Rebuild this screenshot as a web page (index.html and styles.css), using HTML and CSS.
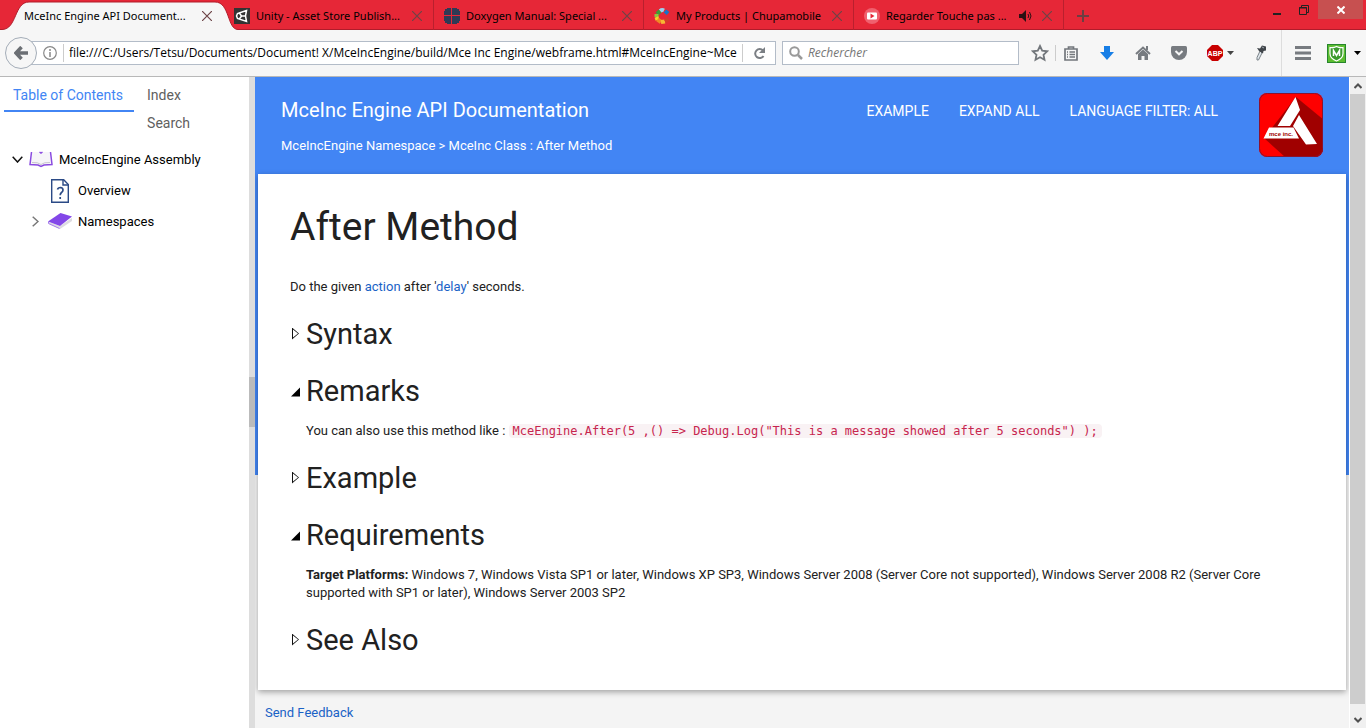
FILE: index.html
```html
<!DOCTYPE html>
<html lang="en">
<head>
<meta charset="utf-8">
<title>MceInc Engine API Documentation</title>
<link rel="stylesheet" href="styles.css">
</head>
<body>
<header class="tabstrip">
  <div class="tab tab-active">
    <svg class="tab-shape" width="236" height="30" viewBox="0 0 236 30"><path d="M0 30V29.500C15 29.500 12 2 27 2H213C228 2 225 29.500 236 29.500V30Z" fill="#f6f6f6"/><path d="M0 29.500C15 29.500 12 2 27 2H213C228 2 225 29.500 236 29.500" fill="none" stroke="#b01c2b"/></svg>
    <span class="tab-title">MceInc Engine API Document...</span>
    <button class="tab-close" aria-label="Close tab"><svg width="10" height="10"><path d="M0 0L10 10M10 0L0 10"/></svg></button>
  </div>
  <div class="tab">
    <svg class="favicon" width="16" height="16"><path fill="#333" d="M0 0h16v16H0z"/><path d="M12.500 2.500L3.500 5.500 2.500 8l1 2.500 9 3-1-5.500zM7.500 8h4.500M7.500 8L5 4.500M7.500 8L5 11.500" fill="none" stroke="#fff" stroke-width="1.500"/></svg>
    <span class="tab-title">Unity - Asset Store Publish...</span>
    <button class="tab-close" aria-label="Close tab"><svg width="10" height="10"><path d="M0 0L10 10M10 0L0 10"/></svg></button>
  </div>
  <div class="tab">
    <svg class="favicon" width="16" height="16"><path fill="#2f3a55" d="M3 0h4v7H0V3h1V1h2zM8 0h5v1h2v2h1v4H8zM0 8h7v8H3v-1H1v-2H0zM8 8h8v5h-1v2h-2v1H8z"/></svg>
    <span class="tab-title">Doxygen Manual: Special ...</span>
    <button class="tab-close" aria-label="Close tab"><svg width="10" height="10"><path d="M0 0L10 10M10 0L0 10"/></svg></button>
  </div>
  <div class="tab">
    <svg class="favicon" width="16" height="16" fill="none" stroke-width="4"><path stroke="#9bd0ef" d="M6 3Q8 1.500 10 2.500"/><path stroke="#1673c8" d="M11 3l3 2.500"/><path stroke="#3f9b35" d="M3 6l3-3"/><path stroke="#8cc63f" d="M2.500 9V6"/><path stroke="#f5d327" d="M3.500 12l-1-3"/><path stroke="#f08a24" d="M7 14l-3.500-2.500"/><path stroke="#f7b733" d="M11 13.500L7 14"/><path stroke="#d63a2b" d="M14.500 11L11 13.500"/></svg>
    <span class="tab-title">My Products | Chupamobile</span>
    <button class="tab-close" aria-label="Close tab"><svg width="10" height="10"><path d="M0 0L10 10M10 0L0 10"/></svg></button>
  </div>
  <div class="tab">
    <svg class="favicon" width="16" height="16"><circle cx="8" cy="8" r="8" fill="#f0606e"/><rect x="3" y="4.500" width="10" height="7" rx="1" fill="#fff"/><path d="M6.500 5.500v5l4-2.500z" fill="#e62737"/></svg>
    <span class="tab-title">Regarder Touche pas ...</span>
    <button class="tab-sound" aria-label="Mute tab"><svg width="14" height="12"><path d="M0 4h3l4-4v12L3 8H0z" fill="#2b1013"/><path d="M9 4q1.500 2 0 4M10.500 2q3 4 0 8" fill="none" stroke="#2b1013"/></svg></button>
    <button class="tab-close" aria-label="Close tab"><svg width="10" height="10"><path d="M0 0L10 10M10 0L0 10"/></svg></button>
  </div>
  <button class="new-tab" aria-label="New tab"><svg width="12" height="12"><path d="M6 0v12M0 6h12" stroke="#6d3e42" stroke-width="2"/></svg></button>
  <div class="window-controls">
    <button aria-label="Minimize"><svg width="8" height="10"><path d="M0 9h8" stroke="#222" stroke-width="2"/></svg></button>
    <button aria-label="Restore"><svg width="10" height="10"><path d="M2.500 2V.5h7v7H8M.5 2.500h7v7h-7z" fill="none" stroke="#222"/><path d="M0 3h8" stroke="#222"/></svg></button>
    <button class="window-close" aria-label="Close"><svg width="8" height="8"><path d="M.5.500l7 7M7.500.5l-7 7" stroke="#fff" stroke-width="2"/></svg></button>
  </div>
</header>

<div class="toolbar">
  <button class="back" aria-label="Back"><svg width="14" height="14"><path d="M7.500 1L2 7l5.500 6M2 7h12" fill="none" stroke="#6b6f74" stroke-width="3.500"/></svg></button>
  <div class="urlbar">
    <button class="info" aria-label="Site information"><svg width="14" height="14"><circle cx="7" cy="7" r="6.300" fill="none" stroke="#888" stroke-width="1.200"/><path d="M7 6v5M7 3v2" stroke="#888" stroke-width="1.500"/></svg></button>
    <input class="url" aria-label="Address" value="file:///C:/Users/Tetsu/Documents/Document! X/MceIncEngine/build/Mce Inc Engine/webframe.html#MceIncEngine~Mce">
    <button class="reload" aria-label="Reload"><svg width="13" height="13"><path d="M10 3.500A4.500 4.500 0 1 0 10.500 9" fill="none" stroke="#7b7f84" stroke-width="2"/><path d="M12 0v6H6z" fill="#7b7f84"/></svg></button>
  </div>
  <label class="searchbar">
    <svg width="14" height="14"><circle cx="5.500" cy="5.500" r="4.300" fill="none" stroke="#999" stroke-width="2"/><path d="M9 9l4 4" stroke="#999" stroke-width="2.500"/></svg>
    <input aria-label="Search" placeholder="Rechercher">
  </label>
  <div class="bookmark-group">
    <button aria-label="Bookmark"><svg width="18" height="18"><path d="M9 2l2.200 4.700 5 .6-3.700 3.500 1 5L9 13.300l-4.500 2.500 1-5L1.800 7.300l5-.6z" fill="none" stroke="#73777c" stroke-width="1.800"/></svg></button>
    <button aria-label="Show bookmarks"><svg width="14" height="15"><path d="M1 3h12v11H1zM4.500 3V1h5v2" fill="none" stroke="#73777c" stroke-width="1.700"/><path d="M3 6h1M5.500 6H11M3 8.500h1M5.500 8.500H11M3 11h1M5.500 11H11" stroke="#73777c" stroke-width="1.300"/></svg></button>
  </div>
  <button class="tool" aria-label="Downloads"><svg width="14" height="14"><path d="M4 0h6v6h4l-7 8-7-8h4z" fill="#177ee6"/></svg></button>
  <button class="tool" aria-label="Home"><svg width="16" height="14"><path d="M1 8l7-6.500L15 8" fill="none" stroke="#777b80" stroke-width="2"/><path d="M11 0h2v4h-2zM3 8l5-4.500L13 8v6H9.500v-4h-3v4H3z" fill="#777b80"/></svg></button>
  <button class="tool" aria-label="Pocket"><svg width="16" height="14"><path d="M1.500 0h13Q16 0 16 1.500V6a8 8 0 0 1-16 0V1.500Q0 0 1.500 0z" fill="#777b80"/><path d="M4.500 5L8 8.300 11.500 5" fill="none" stroke="#f6f6f6" stroke-width="2"/></svg></button>
  <button class="adblock" aria-label="Adblock Plus"><svg width="16" height="16" viewBox="0 0 16 16"><path d="M5 0h6l5 5v6l-5 5H5l-5-5V5z" fill="#c80000"/><text x="8" y="11" text-anchor="middle" class="abp">ABP</text></svg><svg width="7" height="4"><path d="M0 0h7L3.500 4z" fill="#444"/></svg></button>
  <button class="tool" aria-label="Color picker"><svg width="12" height="16"><path d="M5 6L2 12.500V15h1.500L7 8z" fill="#dfe6ec" stroke="#7a8288"/><path d="M2 3l3 .5L7 .500l4 1v4L8.500 6 8 8.500 4 6z" fill="#40454a"/><path d="M7 2l2 1" stroke="#a4abb1"/></svg></button>
  <div class="menu-group">
    <button class="tool" aria-label="Menu"><svg width="16" height="14"><path d="M0 1.500h16M0 7h16M0 12.500h16" stroke="#777b80" stroke-width="3"/></svg></button>
    <button class="shield" aria-label="WebAdvisor"><svg width="19" height="19"><rect x=".5" y=".5" width="18" height="18" fill="#5cbd2f" stroke="#26852d"/><path d="M9.500 2.500q3 1.500 6.500 1v6q0 5-6.500 7.500-6.500-2.500-6.500-7.500v-6q3.500.5 6.500-1z" fill="#3b9a2e" stroke="#fff" stroke-width="1.200"/><path d="M6.500 12V6.500l3 5 3-5V12" fill="none" stroke="#fff" stroke-width="1.500"/></svg><svg width="7" height="4"><path d="M0 0h7L3.500 4z" fill="#000"/></svg></button>
  </div>
</div>

<div class="workspace">
  <aside class="sidebar">
    <nav class="side-tabs">
      <a class="side-tab side-tab-active" href="#toc">Table of Contents</a>
      <div class="side-tab-column">
        <a class="side-tab" href="#index">Index</a>
        <a class="side-tab" href="#search">Search</a>
      </div>
    </nav>
    <ul class="tree">
      <li class="node">
        <svg width="11" height="7"><path d="M.7.700L5.500 6 10.300.7" fill="none" stroke="#111" stroke-width="1.500"/></svg>
        <svg width="24" height="17"><path d="M3 1L1 13l8 1 3 2 3-2 8-1L21 1h-8l-1 1-1-1z" fill="#f6f5f8"/><path d="M2.500 1L1 13.500l8 .5 3 1.500 3-1.500 8-.5L21.500 1M10.500 1l1.500 1 1.500-1" fill="none" stroke="#8a4be0" stroke-width="1.500"/><path d="M3 11.500q6-.5 9 2 3-2.500 9-2" fill="none" stroke="#c9c6cf"/></svg>
        <a href="#assembly">MceIncEngine Assembly</a>
      </li>
      <li class="node node-leaf">
        <svg width="18" height="24" viewBox="0 0 18 24"><path d="M.7.700h12L17.300 5.500v17.800H.7z" fill="#fff" stroke="#2b4a86" stroke-width="1.400"/><path d="M12 1v5h5" fill="none" stroke="#2b4a86" stroke-width="1.400"/><path d="M6.500 10.500q.5-2 3-2 2.500.2 2.500 2.500 0 1.500-1.500 2.500-1.300 1-1.300 2.700M9.200 18v2" fill="none" stroke="#2b4a86" stroke-width="1.700"/></svg>
        <a href="#overview">Overview</a>
      </li>
      <li class="node node-child">
        <svg width="7" height="11"><path d="M.7.700L6 5.500.7 10.300" fill="none" stroke="#777" stroke-width="1.500"/></svg>
        <svg width="24" height="17"><path d="M1 9l11 4L24 5v3l-12 8L1 11z" fill="#dddbe1"/><path d="M0 8.500L12.500 0 24 3.500 12 13z" fill="#8347e8"/><path d="M.5 8.500v2l11 5" fill="none" stroke="#a57aee"/></svg>
        <a href="#namespaces">Namespaces</a>
      </li>
    </ul>
  </aside>
  <div class="splitter"></div>
  <main class="content">
    <header class="doc-header">
      <div class="doc-titles">
        <div class="doc-title">MceInc Engine API Documentation</div>
        <div class="breadcrumb"><a href="#ns">MceIncEngine Namespace</a> &gt; <a href="#class">MceInc Class</a> : After Method</div>
      </div>
      <nav class="doc-nav">
        <a href="#example">EXAMPLE</a>
        <a href="#expand">EXPAND ALL</a>
        <a href="#language">LANGUAGE FILTER: ALL</a>
      </nav>
      <svg class="logo" width="64" height="64" viewBox="0 0 64 64"><defs><clipPath id="tile"><rect width="64" height="64" rx="8"/></clipPath></defs><g clip-path="url(#tile)"><path d="M0 0h64v64H0z" fill="#fe0000"/><path d="M37 4l29 24v36H26L5 45z" fill="#a00000"/></g><path d="M36.500 4L41 17 31 33H18.500zM40 22L58 51l-11 .5L34 33zM10 34.500h24.500L40 45.500H4.500z" fill="#fff"/><rect x=".5" y=".5" width="63" height="63" rx="8" fill="none" stroke="#8a1230"/><text x="22" y="43" text-anchor="middle" class="logo-text">mce inc.</text></svg>
    </header>
    <article class="card">
      <h1>After Method</h1>
      <p class="summary">Do the given <a href="#action">action</a> after '<a href="#delay">delay</a>' seconds.</p>
      <details>
        <summary><span class="marker"></span><h2>Syntax</h2></summary>
      </details>
      <details open>
        <summary><span class="marker"></span><h2>Remarks</h2></summary>
        <p>You can also use this method like : <code>MceEngine.After(5 ,() =&gt; Debug.Log("This is a message showed after 5 seconds") );</code></p>
      </details>
      <details>
        <summary><span class="marker"></span><h2>Example</h2></summary>
      </details>
      <details open>
        <summary><span class="marker"></span><h2>Requirements</h2></summary>
        <p><strong>Target Platforms:</strong> Windows 7, Windows Vista SP1 or later, Windows XP SP3, Windows Server 2008 (Server Core not supported), Windows Server 2008 R2 (Server Core supported with SP1 or later), Windows Server 2003 SP2</p>
      </details>
      <details>
        <summary><span class="marker"></span><h2>See Also</h2></summary>
      </details>
    </article>
    <footer class="doc-footer"><a href="#feedback">Send Feedback</a></footer>
  </main>
  <div class="scrollbar">
    <button aria-label="Scroll up"><svg width="8" height="6"><path d="M.5 5L4 1.500 7.500 5" fill="none" stroke="#505050" stroke-width="2"/></svg></button>
    <div class="thumb"></div>
    <button aria-label="Scroll down"><svg width="8" height="6"><path d="M.5 1L4 4.500 7.500 1" fill="none" stroke="#505050" stroke-width="2"/></svg></button>
  </div>
</div>
</body>
</html>
```

FILE: styles.css
```css
* { box-sizing: border-box; }
body {
  margin: 0;
  height: 100vh;
  display: flex;
  flex-direction: column;
  overflow: hidden;
  background: #fff;
  font: 13px/18px Roboto, "Liberation Sans", sans-serif;
  color: #212121;
}
button {
  display: flex;
  align-items: center;
  justify-content: center;
  padding: 0;
  border: 0;
  background: none;
  flex: none;
}
input { border: 0; padding: 0; outline: 0; background: none; min-width: 0; }
a { color: #1a62c6; text-decoration: none; }
svg { flex: none; display: block; }

/* Tab strip */
.tabstrip {
  display: flex;
  height: 30px;
  flex: none;
  padding-left: 14px;
  background: #e62737;
  border-bottom: 1px solid #b01c2b;
  font: 11px/18px "Noto Sans", "Open Sans", sans-serif;
  color: #000;
}
.tab {
  display: flex;
  align-items: center;
  width: 210px;
  height: 30px;
  padding: 2px 10px 0;
  border-right: 1px solid #b9202e;
}
.tab-active { position: relative; z-index: 1; border-right-color: transparent; }
.tab-shape { position: absolute; left: -12px; top: 0; }
.tab-title { position: relative; flex: 1; min-width: 0; white-space: nowrap; }
.favicon { margin-right: 6px; }
.tab-close { position: relative; width: 12px; height: 18px; }
.tab-close svg { stroke: #6d4447; stroke-width: 1.2; }
.tab-sound { margin-right: 8px; }
.new-tab { width: 38px; padding-top: 2px; }
.window-controls { display: flex; margin-left: auto; height: 19px; padding-right: 3px; }
.window-controls button { width: 27px; height: 19px; }
.window-controls .window-close { width: 45px; margin-left: 1px; background: #c75050; }

/* Navigation toolbar */
.toolbar {
  display: flex;
  align-items: center;
  height: 47px;
  flex: none;
  padding: 0 5px;
  background: #f6f6f6;
  border-bottom: 1px solid #b8b8b8;
  font: 12px/18px "Open Sans", "Noto Sans", sans-serif;
}
.back {
  position: relative;
  width: 32px;
  height: 32px;
  border: 1px solid #a4adb8;
  border-radius: 50%;
  background: #f6f6f6;
}
.urlbar {
  display: flex;
  align-items: center;
  flex: 1;
  height: 24px;
  margin-left: -6px;
  padding-left: 5px;
  background: #fff;
  border: 1px solid #b3bcc8;
}
.info { width: 27px; height: 18px; border-right: 1px solid #ccc; }
.url { flex: 1; margin: 0 2px 0 5px; font: inherit; color: #000; }
.reload { width: 33px; height: 18px; border-left: 1px solid #ccc; }
.searchbar {
  display: flex;
  align-items: center;
  gap: 5px;
  width: 237px;
  height: 24px;
  margin: 0 6px;
  padding: 0 6px;
  background: #fff;
  border: 1px solid #b3bcc8;
}
.searchbar input { flex: 1; font: inherit; font-style: italic; }
.searchbar input::placeholder { color: #777; opacity: 1; }
.bookmark-group { display: flex; padding-right: 3px; }
.bookmark-group button { width: 30px; height: 16px; }
.bookmark-group button + button { width: 31px; border-left: 1px solid #ccc; }
.tool { width: 36px; height: 24px; }
.adblock { width: 46px; gap: 4px; }
.abp { font: bold 7px "Liberation Sans", sans-serif; fill: #fff; }
.menu-group {
  display: flex;
  align-items: center;
  height: 46px;
  margin-left: 2px;
  padding-left: 3px;
  border-left: 1px solid #ddd;
}
.shield { gap: 8px; margin-left: 6px; }

/* Page area */
.workspace { display: flex; flex: 1; min-height: 0; }
.sidebar { width: 249px; flex: none; background: #fff; }
.side-tabs { display: flex; align-items: flex-start; padding: 4px 4px 0; gap: 13px; }
.side-tab-column { display: flex; flex-direction: column; }
.side-tab { font-size: 14px; line-height: 28px; color: #606060; }
.side-tab-active { padding: 0 11px 1px 9px; color: #4285f4; border-bottom: 2px solid #4285f4; }
.tree { list-style: none; margin: 7px 0 0; padding: 0 12px; }
.node { display: flex; align-items: center; height: 31px; gap: 6px; }
.node a { color: #000; }
.node-leaf { padding-left: 39px; gap: 9px; }
.node-child { padding-left: 20px; gap: 9px; }
.node-child a { margin-left: -3px; }
.splitter {
  width: 6px;
  flex: none;
  background: linear-gradient(#bbb, #bbb) center 300px / 6px 50px no-repeat #ddd;
}
.content {
  flex: 1;
  min-width: 0;
  overflow: hidden;
  padding: 0 3px;
  background: linear-gradient(#4285f4 398px, #f4f4f4 398px);
}
.doc-header { display: flex; align-items: flex-start; padding: 16px 23px 17px; color: #fff; }
.doc-header a { color: #fff; }
.doc-titles { flex: 1; }
.doc-title { font-size: 20px; line-height: 34px; }
.breadcrumb { margin-top: 10px; }
.doc-nav { display: flex; gap: 30px; padding-top: 9px; font-size: 14px; }
.logo { margin-left: 41px; }
.logo-text { font: bold 6px "Liberation Sans", sans-serif; fill: #a00000; }
.card {
  padding: 29px 32px 22px;
  background: #fff;
  box-shadow: 0 2px 6px rgba(0, 0, 0, 0.35);
}
h1 { margin: 0 0 27px; font-size: 39px; line-height: 48px; font-weight: 400; }
p { margin: 0; }
.summary { margin-bottom: 9px; }
summary { display: flex; align-items: center; height: 57px; list-style: none; }
summary::-webkit-details-marker { display: none; }
h2 { margin: 0; font-size: 29px; line-height: 40px; font-weight: 400; }
.marker {
  width: 16px;
  height: 12px;
  flex: none;
  background: #111;
  clip-path: polygon(2px 0, 9px 6px, 2px 12px, 2px 0, 3px 2px, 3px 10px, 8px 6px, 3px 2px);
}
details[open] .marker { background: #000; clip-path: polygon(10px 3px, 10px 12px, 1px 12px); }
details p { margin: 3px 0 9px; padding: 0 28px 0 16px; }
code {
  padding: 0 4px;
  border-radius: 4px;
  background: #f9f2f4;
  color: #c7254e;
  font: 12px/14px "DejaVu Sans Mono", "Liberation Mono", monospace;
}
.doc-footer { padding: 14px 7px; }
.scrollbar {
  display: flex;
  flex-direction: column;
  width: 17px;
  flex: none;
  border-left: 1px solid #fff;
  background: #f0f0f0;
}
.scrollbar button { height: 17px; }
.thumb { flex: 1; margin: 0 1px 7px 0; background: #cdcdcd; }
```
